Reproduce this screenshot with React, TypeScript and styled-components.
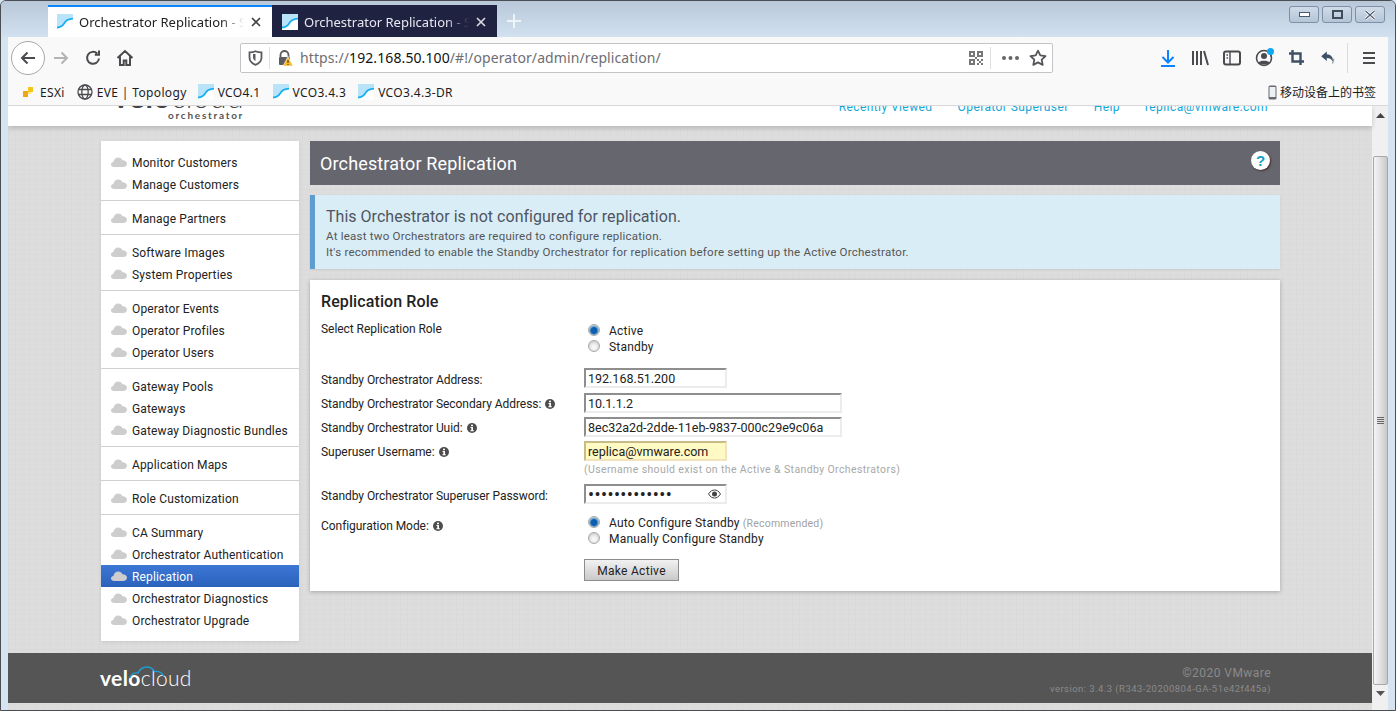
import React from "react";
import styled, { createGlobalStyle } from "styled-components";

const Global = createGlobalStyle`
  html, body { margin: 0; padding: 0; height: 100%; overflow: hidden; background: #d6e4f2; }
  * { box-sizing: border-box; }
`;

const chromeFont = `"Noto Sans", "Noto Sans CJK SC", "Liberation Sans", sans-serif`;
const pageFont = `Roboto, "Liberation Sans", sans-serif`;

const Win = styled.div`
  width: 1396px; height: 711px; display: flex; flex-direction: column; overflow: hidden;
  border: 1px solid #4a4d52; border-radius: 6px 6px 0 0; background: #d6e4f2;
`;
const TitleBar = styled.div`
  height: 36px; flex: none; display: flex; align-items: flex-end; padding-left: 47px; position: relative;
  background: linear-gradient(#b8c8d8, #d2e1f0);
`;
const Tab = styled.div<{ $active?: boolean }>`
  width: ${p => (p.$active ? 224 : 225)}px; height: 32px; display: flex; align-items: center; padding-left: ${p => (p.$active ? 9 : 10)}px;
  background: ${p => (p.$active ? "#fff" : "#1f2240")};
  color: ${p => (p.$active ? "#222" : "#e8e8ee")};
  border-top: 2px solid ${p => (p.$active ? "#0a84ff" : "#1f2240")};
  font: 13px ${chromeFont};
`;
const TabLabel = styled.span`
  width: 165px; margin-left: 6px; white-space: nowrap; overflow: hidden;
  -webkit-mask-image: linear-gradient(90deg, #000 86%, transparent);
  mask-image: linear-gradient(90deg, #000 86%, transparent);
`;
const TabClose = styled.svg`width: 12px; height: 12px; margin-left: 6px;`;
const NewTab = styled.svg`width: 16px; height: 16px; margin: 0 0 8px 9px;`;
const WinButtons = styled.div`
  margin-left: auto; align-self: flex-start; display: flex; gap: 3px; padding: 5px 10px 0 0;
`;
const WinButton = styled.div`
  width: 30px; height: 17px; display: flex; align-items: center; justify-content: center;
  border: 1px solid #7f8fa6; border-radius: 3px; background: linear-gradient(#cfdbe8, #b5c5d8);
`;
const Toolbar = styled.div`
  height: 38px; flex: none; margin: 0 7px; display: flex; align-items: center; padding: 3px 0 0 3px; background: #f9f9fa;
`;
const BackButton = styled.div`
  width: 34px; height: 34px; border-radius: 50%; border: 1px solid #a8a8a8; background: #fff;
  display: flex; align-items: center; justify-content: center;
`;
const Slot = styled.div`width: 32px; height: 30px; flex: none; display: flex; align-items: center; justify-content: center; position: relative;`;
const UrlSlot = styled(Slot)`width: 16px;`;
const UrlBar = styled.div`
  width: 813px; height: 30px; margin-left: 99px; display: flex; align-items: center; background: #fff;
  border: 1px solid #c4c4c6; border-radius: 2px; padding-left: 6px;
`;
const UrlDivider = styled.div<{ $wide?: boolean }>`
  width: 1px; height: 22px; background: #e0e0e2; flex: none; margin: ${p => (p.$wide ? "0 10px 0 7px" : "0 6px")};
`;
const UrlText = styled.div`
  font: 14px ${chromeFont}; color: #6e6e72; margin-left: 7px; flex: 1; white-space: nowrap; letter-spacing: .1px;
  b { font-weight: 400; color: #111; }
`;
const RightIcons = styled.div`margin-left: 99px; display: flex; align-items: center;`;
const ToolbarSep = styled.div`width: 1px; height: 30px; background: #dcdcde; margin: 0 5px 0 3px;`;
const Badge = styled.span`
  position: absolute; width: 7px; height: 7px; border-radius: 50%; background: #0fa8f0; top: 5px; right: 6px;
`;
const Bookmarks = styled.div`
  height: 31px; flex: none; margin: 0 7px; display: flex; align-items: center; padding: 4px 12px 0 14px;
  background: #f9f9fa; border-bottom: 1px solid #d8d8da; font: 12px ${chromeFont}; letter-spacing: .35px; color: #1c1c1c;
`;
const Bookmark = styled.div<{ $gap?: number; $after?: number }>`
  display: flex; align-items: center; gap: ${p => p.$gap ?? 4}px; margin-right: ${p => p.$after ?? 11}px; white-space: nowrap;
`;
const MobileBookmark = styled.div`margin-left: auto; display: flex; align-items: center; gap: 3px; white-space: nowrap; letter-spacing: 0;`;

const Viewport = styled.div`flex: 1; min-height: 0; margin: 0 7px; display: flex; overflow: hidden;`;
const Page = styled.div`
  flex: 1; min-width: 0; display: flex; flex-direction: column; font: 12px ${pageFont}; letter-spacing: .15px; color: #222;
  background-color: #dddddd;
  background-image: repeating-linear-gradient(0deg, rgba(0,0,0,.012) 0 1px, transparent 1px 5px), repeating-linear-gradient(90deg, rgba(0,0,0,.012) 0 1px, transparent 1px 7px);
`;
const Header = styled.header`
  height: 20px; flex: none; background: #fff; box-shadow: 0 2px 5px rgba(0,0,0,.18); overflow: hidden;
  display: flex; justify-content: space-between; padding: 0 104px 0 105px; position: relative;
`;
const LogoTop = styled.div`
  display: flex; flex-direction: column; align-items: flex-end; margin-top: -18px;
`;
const LogoWord = styled.div`font: 700 30px/17px Lato, sans-serif; letter-spacing: .5px; color: #444; span { font-weight: 300; }`;
const LogoSub = styled.div`font: 700 10px/10px Lato, sans-serif; letter-spacing: 1.75px; color: #555; margin-top: 5px;`;
const HeaderLinks = styled.nav`display: flex; gap: 25px; margin-top: -6px;`;
const HeaderLink = styled.a`color: #12a6d8; font-size: 12px; line-height: 15px; white-space: nowrap; letter-spacing: .42px;`;

const Body = styled.div`
  height: 527px; flex: none; display: flex; gap: 11px; padding: 15px 92px 0 93px;
`;
const Sidebar = styled.aside`
  width: 198px; height: 500px; flex: none; background: #fff; box-shadow: 0 1px 3px rgba(0,0,0,.1);
  display: flex; flex-direction: column;
`;
const NavGroup = styled.div`
  padding: 6px 0 5px; border-bottom: 1px solid #d0d0d0;
  &:first-child { padding-top: 10px; }
  &:last-child { padding-bottom: 10px; border-bottom: none; }
`;
const NavItem = styled.div<{ $active?: boolean }>`
  height: 22px; display: flex; align-items: center; gap: 5px; padding-left: 10px; white-space: nowrap;
  color: ${p => (p.$active ? "#fff" : "#222")};
  background: ${p => (p.$active ? "linear-gradient(#3d77d6, #2a62bb)" : "transparent")};
`;
const NavText = styled.span`padding-top: 2px;`;
const Main = styled.main`flex: 1; min-width: 0; display: flex; flex-direction: column;`;
const TitleStrip = styled.div`
  height: 44px; flex: none; background: #66666f; display: flex; align-items: center; justify-content: space-between;
  padding: 0 10px; color: #fff; font-size: 18px; letter-spacing: .14px;
`;
const HelpDot = styled.div`
  width: 19px; height: 19px; border-radius: 50%; background: #fff; color: #12a0c8; font: 700 15px/19px "Liberation Sans", sans-serif;
  text-align: center; letter-spacing: 0; box-shadow: 1px 1px 2px rgba(60,0,0,.6); margin-bottom: 5px;
`;
const Alert = styled.div`
  height: 74px; margin-top: 10px; flex: none; background: #d9edf7; border-left: 5px solid #5f9ccf; padding: 12px 0 0 11px; color: #555;
  box-shadow: 0 1px 2px rgba(0,0,0,.08);
`;
const AlertTitle = styled.div`font-size: 16px; line-height: 20px; letter-spacing: .02px; color: #4f5560; margin-bottom: 1px;`;
const AlertLine = styled.div`font-size: 11.5px; line-height: 16px; letter-spacing: .23px;`;
const Card = styled.section`
  margin-top: 11px; height: 311px; flex: none; background: #fff; padding: 12px 11px 0; box-shadow: 0 1px 4px rgba(0,0,0,.25);
  display: flex; flex-direction: column; letter-spacing: -.05px;
`;
const CardTitle = styled.h2`margin: 0 0 8px; font: 500 16px/20px ${pageFont}; letter-spacing: .1px; color: #222;`;
const Row = styled.div<{ $top?: number }>`
  display: grid; grid-template-columns: 263px 1fr; margin-top: ${p => p.$top ?? 0}px;
`;
const Label = styled.div<{ $rise?: boolean }>`
  display: flex; align-items: center; gap: 4px; height: 20px; padding-top: ${p => (p.$rise ? 2 : 4)}px; white-space: nowrap;
`;
const TopLabel = styled(Label)`height: 16px; padding-top: 2px;`;
const RadioStack = styled.div<{ $flush?: boolean }>`padding: ${p => (p.$flush ? 0 : 2)}px 0 0 4px;`;
const RadioRow = styled.div`height: 16px; display: flex; align-items: center; gap: 9px; white-space: nowrap; letter-spacing: .2px;`;
const RadioText = styled.span`padding-top: 2px;`;
const Radio = styled.span<{ $on?: boolean }>`
  width: 12px; height: 12px; border-radius: 50%; flex: none; border: 1px solid #a9a9a9;
  background: ${p => (p.$on ? "radial-gradient(circle at 50% 55%, #0a5fb0 0 3px, #74a5cc 4px, #dce4ea 6px)" : "radial-gradient(circle at 50% 60%, #f5f5f5 0 2px, #cfcfcf 6px)")};
`;
const Muted = styled.span`color: #a3a3a3; font-size: 10.5px; margin-left: 3px;`;
const Field = styled.input<{ $w: number; $yellow?: boolean; $secret?: boolean }>`
  width: ${p => p.$w}px; height: 20px; display: block; padding: 0 2px; outline: none;
  font: ${p => (p.$secret ? "18px" : "12.5px")} Roboto, "Liberation Sans", sans-serif; color: #222;
  letter-spacing: ${p => (p.$secret ? ".4px" : "0")};
  background: ${p => (p.$yellow ? "#fff9c4" : "#fff")};
  border-style: solid; border-width: 2px 2px 2px 2px;
  border-color: ${p => (p.$yellow ? "#c9bb87 #f3e3bb #f3e3bb #c9bb87" : "#8e8e8e #ececec #ececec #8e8e8e")};
`;
const PasswordWrap = styled.div`position: relative; width: 143px;`;
const EyeIcon = styled.svg`position: absolute; right: 6px; top: 5px; width: 13px; height: 10px;`;
const Hint = styled.div`color: #a8a8a8; font-size: 10.5px; line-height: 14px; letter-spacing: .38px; white-space: nowrap;`;
const ActionButton = styled.button`
  width: 95px; height: 22px; padding: 2px 0 0; font: 12px ${pageFont}; letter-spacing: .3px; color: #222;
  border: 1px solid #8c8c8c; background: linear-gradient(#f2f2f2, #c9c9c9);
`;
const Footer = styled.footer`
  height: 50px; flex: none; background: #555; display: flex; justify-content: space-between; padding: 0 101px 0 92px; position: relative;
`;
const BrandWrap = styled.div`position: relative; padding-top: 13px; color: #fff;`;
const BrandWord = styled.div`font: 700 21px/24px Lato, sans-serif; letter-spacing: .35px; span { font-weight: 300; }`;
const BrandArc = styled.svg`position: absolute; left: 29px; top: 13px; width: 36px; height: 13px;`;
const FooterMeta = styled.div`text-align: right; color: #8a8a8a; padding-top: 12px;`;
const Copy = styled.div`font-size: 12px; line-height: 16px; letter-spacing: .45px;`;
const Version = styled.div`font-size: 9.5px; line-height: 16px; letter-spacing: .45px;`;

const Scrollbar = styled.div`
  width: 16px; flex: none; background: #f0f0f0; display: flex; flex-direction: column; align-items: center;
`;
const ScrollArrow = styled.svg`width: 9px; height: 6px; flex: none;`;
const ScrollTop = styled.div`height: 50px; flex: none; padding-top: 7px; display: flex;`;
const Thumb = styled.div`
  width: 15px; height: 529px; flex: none; border: 1px solid #a8a8a8; border-radius: 2px;
  background: linear-gradient(90deg, #f4f4f4, #dcdcdc 60%, #c8c8c8); display: flex; align-items: center; justify-content: center;
`;
const Grip = styled.div`width: 7px; height: 7px; background: repeating-linear-gradient(#666 0 1px, transparent 1px 2px);`;
const ScrollBottom = styled.div`padding-top: 6px; display: flex;`;
const Glyph = styled.svg<{ $m?: string }>`flex: none; margin: ${p => p.$m ?? 0};`;

const ink = "#4a4a4f";

const Favicon = () => (
  <Glyph width="16" height="16" viewBox="0 0 16 16">
    <rect width="16" height="16" fill="#fff" />
    <path d="M0 0h16v4.500c-5 .3-7.500 2-9 5-1.300 2.500-3 3.500-7 3.800z" fill="#b9e3f9" />
    <path d="M0 13.500c4-.2 5.700-1.300 7-3.800 1.500-3 4-4.700 9-5" fill="none" stroke="#19b0f0" strokeWidth="1.800" />
  </Glyph>
);
const CloseX = ({ c }: { c: string }) => (
  <TabClose viewBox="0 0 12 12"><path d="M2 2l8 8M10 2l-8 8" stroke={c} strokeWidth="1.700" /></TabClose>
);
const Cloud = () => (
  <Glyph width="16" height="10" viewBox="0 0 16 10">
    <path d="M3.200 10C1.300 10 0 8.900 0 7.500 0 6.200 1 5.200 2.400 5 2.800 2.600 4.800 0.600 7.300.6c1.900 0 3.400 1 4.100 2.600 2.500-.1 4.600 1.400 4.600 3.500 0 1.900-1.600 3.300-3.800 3.300z" fill="#cdcdcd" />
  </Glyph>
);
const Info = () => (
  <Glyph width="10" height="10" viewBox="0 0 10 10">
    <circle cx="5" cy="5" r="5" fill="#4d4d4d" />
    <rect x="4" y="1.700" width="2" height="1.500" fill="#fff" />
    <path d="M3.500 4h2.500v3.200h.8v1H3.400v-1h.9V5h-.8z" fill="#fff" />
  </Glyph>
);
const Icon = ({ children, w = 20, h = 20 }: { children: React.ReactNode; w?: number; h?: number }) => (
  <svg width={w} height={h} viewBox={`0 0 ${w} ${h}`} fill="none" stroke={ink} strokeWidth="2">{children}</svg>
);

const groups: string[][] = [
  ["Monitor Customers", "Manage Customers"],
  ["Manage Partners"],
  ["Software Images", "System Properties"],
  ["Operator Events", "Operator Profiles", "Operator Users"],
  ["Gateway Pools", "Gateways", "Gateway Diagnostic Bundles"],
  ["Application Maps"],
  ["Role Customization"],
  ["CA Summary", "Orchestrator Authentication", "Replication", "Orchestrator Diagnostics", "Orchestrator Upgrade"],
];

const qrCells = ["1110111", "1010101", "1110111", "0001000", "1110101", "1010010", "1110101"];

export default function App() {
  return (
    <Win>
      <Global />
      <TitleBar>
        <Tab $active><Favicon /><TabLabel>Orchestrator Replication - Standby</TabLabel><CloseX c="#444" /></Tab>
        <Tab><Favicon /><TabLabel>Orchestrator Replication - Standby</TabLabel><CloseX c="#d8d8e0" /></Tab>
        <NewTab viewBox="0 0 16 16"><path d="M8 1v14M1 8h14" stroke="#eef3f8" strokeWidth="2" /></NewTab>
        <WinButtons>
          <WinButton><svg width="11" height="5"><rect x=".5" y=".5" width="10" height="4" fill="#fff" stroke="#4b5a6c" /></svg></WinButton>
          <WinButton><svg width="11" height="9"><rect x="1" y="1" width="9" height="7" fill="none" stroke="#3f4c5c" strokeWidth="2" /></svg></WinButton>
          <WinButton><svg width="12" height="10" viewBox="0 0 12 10"><path d="M1.500 1l9 8M10.500 1l-9 8" stroke="#fff" strokeWidth="3" /><path d="M1.500 1l9 8M10.500 1l-9 8" stroke="#4d5b6d" strokeWidth="1.200" /></svg></WinButton>
        </WinButtons>
      </TitleBar>

      <Toolbar>
        <BackButton>
          <Icon><path d="M17 10H4M9.500 4.500L4 10l5.500 5.500" /></Icon>
        </BackButton>
        <Slot><svg width="20" height="20" fill="none" stroke="#b4b4b6" strokeWidth="2"><path d="M3 10h13M10.500 4.500L16 10l-5.500 5.500" /></svg></Slot>
        <Slot><Icon><path d="M16 10.500a6 6 0 1 1-1.800-5M16 2.500v4.200h-4.200" /></Icon></Slot>
        <Slot>
          <Icon><path d="M2.500 10L10 3l7.500 7M5 8.500V17h3.700v-4.500h2.600V17H15V8.500" /></Icon>
        </Slot>
        <UrlBar>
          <UrlSlot>
            <svg width="15" height="16" viewBox="0 0 15 16"><path d="M7.500 1.200c2 .9 3.800 1.200 6 1.200v5c0 3.600-2.500 6-6 7.400-3.500-1.400-6-3.800-6-7.400v-5c2.200 0 4-.3 6-1.200z" fill="none" stroke="#5b5b60" strokeWidth="1.800" /><path d="M7.500 4v7c-1.800-1-2.500-2.300-2.500-4V4z" fill="#5b5b60" /></svg>
          </UrlSlot>
          <UrlDivider />
          <Glyph width="16" height="16" viewBox="0 0 16 16" $m="0 0 0 1px">
            <path d="M3.500 7V5a4 4 0 0 1 8 0v2" fill="none" stroke="#5b5b60" strokeWidth="1.800" />
            <rect x="2" y="7" width="11" height="8" rx="1" fill="#5b5b60" />
            <path d="M11 6.500l5 9.500H6z" fill="#f5b81f" stroke="#fff" strokeWidth=".6" />
            <path d="M11 10v3M11 14v1" stroke="#333" strokeWidth="1" />
          </Glyph>
          <UrlText>https://<b>192.168.50.100</b>/#!/operator/admin/replication/</UrlText>
          <Glyph width="14" height="14" viewBox="0 0 7 7" shapeRendering="crispEdges">
            {qrCells.flatMap((r, y) => r.split("").map((c, x) => (c === "1" ? <rect key={`${x}-${y}`} x={x} y={y} width="1" height="1" fill="#77777a" /> : null)))}
          </Glyph>
          <UrlDivider $wide />
          <Glyph width="20" height="6" viewBox="0 0 20 6"><circle cx="3" cy="3" r="2" fill="#66666a" /><circle cx="9.500" cy="3" r="2" fill="#66666a" /><circle cx="16" cy="3" r="2" fill="#66666a" /></Glyph>
          <Glyph width="18" height="17" viewBox="0 0 18 17" $m="0 5px 0 8px"><path d="M9 1.600l2.300 4.800 5.200.7-3.800 3.600 1 5.200L9 13.400l-4.700 2.500 1-5.200L1.500 7.100l5.200-.7z" fill="none" stroke="#55555a" strokeWidth="1.800" strokeLinejoin="round" /></Glyph>
        </UrlBar>
        <RightIcons>
          <Slot><svg width="16" height="18" fill="none" stroke="#0a84ff" strokeWidth="2"><path d="M8 1v12M2.500 8L8 13.500 13.500 8M1 17h14" /></svg></Slot>
          <Slot><Icon><path d="M3 3v14M7 3v14M11 3v14M14 3l4 14" /></Icon></Slot>
          <Slot><Icon><rect x="2" y="3.500" width="16" height="13" rx="2" /><path d="M8 3.500v13M4.500 7H6M4.500 10H6" strokeWidth="1.400" /></Icon></Slot>
          <Slot>
            <Icon><circle cx="10" cy="10" r="7.500" strokeWidth="1.600" /><circle cx="10" cy="8" r="3" fill={ink} stroke="none" /><path d="M4.500 14.500c1.500-2.500 9.500-2.500 11 0l-2 2h-7z" fill={ink} stroke="none" /></Icon>
            <Badge />
          </Slot>
          <Slot><svg width="15" height="15" fill="none" stroke="#3f5166" strokeWidth="2.400"><path d="M3.500 0v11.500H15M0 3.500h11.500V15" /></svg></Slot>
          <Slot><svg width="16" height="15" viewBox="0 0 20 18"><path d="M8.500 1.500L1.500 7.500l7 6v-4c3.500 0 6 1 7.500 5 .8-5-1.500-9-7.500-9.500z" fill="#3f5166" /><path d="M15.500 16.500c1.500-2 2-4 1.500-6" fill="none" stroke="#9aa5b2" strokeWidth="1.600" /></svg></Slot>
          <ToolbarSep />
          <Slot><svg width="14" height="14" fill="none" stroke={ink} strokeWidth="2"><path d="M1 2h12M1 7h12M1 12h12" /></svg></Slot>
        </RightIcons>
      </Toolbar>

      <Bookmarks>
        <Bookmark $gap={6} $after={12}>
          <svg width="12" height="12" viewBox="0 0 12 12" shapeRendering="crispEdges"><rect x="6" y="1" width="5" height="5" fill="#f5c518" /><rect x="1" y="5" width="5" height="6" fill="#f0a810" /><rect x="6" y="6" width="3" height="2" fill="#ffe680" /></svg>
          ESXi
        </Bookmark>
        <Bookmark>
          <svg width="16" height="16" viewBox="0 0 16 16" fill="none" stroke="#4a4a4f" strokeWidth="1.300"><circle cx="8" cy="8" r="7" /><ellipse cx="8" cy="8" rx="3.200" ry="7" /><path d="M1.500 5.500h13M1.500 10.500h13" /></svg>
          EVE | Topology
        </Bookmark>
        <Bookmark $after={12}><Favicon />VCO4.1</Bookmark>
        <Bookmark $after={12}><Favicon />VCO3.4.3</Bookmark>
        <Bookmark><Favicon />VCO3.4.3-DR</Bookmark>
        <MobileBookmark>
          <svg width="9" height="15" viewBox="0 0 9 15"><rect x=".5" y=".5" width="8" height="14" rx="1.500" fill="#666a70" /><rect x="1.500" y="2" width="6" height="10" fill="#eef1f4" /></svg>
          移动设备上的书签
        </MobileBookmark>
      </Bookmarks>

      <Viewport>
        <Page>
          <Header>
            <LogoTop>
              <LogoWord>velo<span>cloud</span></LogoWord>
              <LogoSub>orchestrator</LogoSub>
            </LogoTop>
            <HeaderLinks>
              <HeaderLink>Recently Viewed</HeaderLink>
              <HeaderLink>Operator Superuser</HeaderLink>
              <HeaderLink>Help</HeaderLink>
              <HeaderLink>replica@vmware.com</HeaderLink>
            </HeaderLinks>
          </Header>
          <Body>
            <Sidebar>
              {groups.map((g, i) => (
                <NavGroup key={i}>
                  {g.map(item => (
                    <NavItem key={item} $active={item === "Replication"}><Cloud /><NavText>{item}</NavText></NavItem>
                  ))}
                </NavGroup>
              ))}
            </Sidebar>
            <Main>
              <TitleStrip>Orchestrator Replication<HelpDot>?</HelpDot></TitleStrip>
              <Alert>
                <AlertTitle>This Orchestrator is not configured for replication.</AlertTitle>
                <AlertLine>At least two Orchestrators are required to configure replication.</AlertLine>
                <AlertLine>It's recommended to enable the Standby Orchestrator for replication before setting up the Active Orchestrator.</AlertLine>
              </Alert>
              <Card>
                <CardTitle>Replication Role</CardTitle>
                <Row>
                  <TopLabel>Select Replication Role</TopLabel>
                  <RadioStack>
                    <RadioRow><Radio $on /><RadioText>Active</RadioText></RadioRow>
                    <RadioRow><Radio /><RadioText>Standby</RadioText></RadioRow>
                  </RadioStack>
                </Row>
                <Row $top={14}>
                  <Label>Standby Orchestrator Address:</Label>
                  <Field $w={143} readOnly value="192.168.51.200" />
                </Row>
                <Row $top={5}>
                  <Label $rise>Standby Orchestrator Secondary Address: <Info /></Label>
                  <Field $w={258} readOnly value="10.1.1.2" />
                </Row>
                <Row $top={4}>
                  <Label $rise>Standby Orchestrator Uuid: <Info /></Label>
                  <Field $w={258} readOnly value="8ec32a2d-2dde-11eb-9837-000c29e9c06a" />
                </Row>
                <Row $top={4}>
                  <Label $rise>Superuser Username: <Info /></Label>
                  <Field $w={143} $yellow readOnly value="replica@vmware.com" />
                </Row>
                <Row $top={2}>
                  <span />
                  <Hint>(Username should exist on the Active &amp; Standby Orchestrators)</Hint>
                </Row>
                <Row $top={7}>
                  <Label>Standby Orchestrator Superuser Password:</Label>
                  <PasswordWrap>
                    <Field $w={143} $secret type="password" readOnly value="aaaaaaaaaaaaa" />
                    <EyeIcon viewBox="0 0 13 10"><path d="M.5 5C2.500 1.800 4.500 1 6.500 1s4 .8 6 4c-2 3.200-4 4-6 4s-4-.8-6-4z" fill="none" stroke="#444" /><circle cx="6.500" cy="5" r="2.500" fill="#444" /></EyeIcon>
                  </PasswordWrap>
                </Row>
                <Row $top={10}>
                  <Label>Configuration Mode: <Info /></Label>
                  <RadioStack $flush>
                    <RadioRow><Radio $on /><RadioText>Auto Configure Standby<Muted>(Recommended)</Muted></RadioText></RadioRow>
                    <RadioRow><Radio /><RadioText>Manually Configure Standby</RadioText></RadioRow>
                  </RadioStack>
                </Row>
                <Row $top={13}>
                  <span />
                  <ActionButton>Make Active</ActionButton>
                </Row>
              </Card>
            </Main>
          </Body>
          <Footer>
            <BrandWrap>
              <BrandWord>velo<span>cloud</span></BrandWord>
              <BrandArc viewBox="0 0 36 13"><path d="M1 12c1-4 4-5.500 8-5 2-4 5-6 9-6 4 0 6 2 7.500 4.500 4-.5 7.500 1 9.500 5" fill="none" stroke="#1b9fd6" strokeWidth="1.400" /></BrandArc>
            </BrandWrap>
            <FooterMeta>
              <Copy>©2020 VMware</Copy>
              <Version>version: 3.4.3 (R343-20200804-GA-51e42f445a)</Version>
            </FooterMeta>
          </Footer>
        </Page>
        <Scrollbar>
          <ScrollTop>
            <ScrollArrow viewBox="0 0 9 6"><path d="M4.500 0L9 5H0z" fill="#444" /></ScrollArrow>
          </ScrollTop>
          <Thumb><Grip /></Thumb>
          <ScrollBottom>
            <ScrollArrow viewBox="0 0 9 6"><path d="M0 0h9L4.500 5z" fill="#555" /></ScrollArrow>
          </ScrollBottom>
        </Scrollbar>
      </Viewport>
    </Win>
  );
}
